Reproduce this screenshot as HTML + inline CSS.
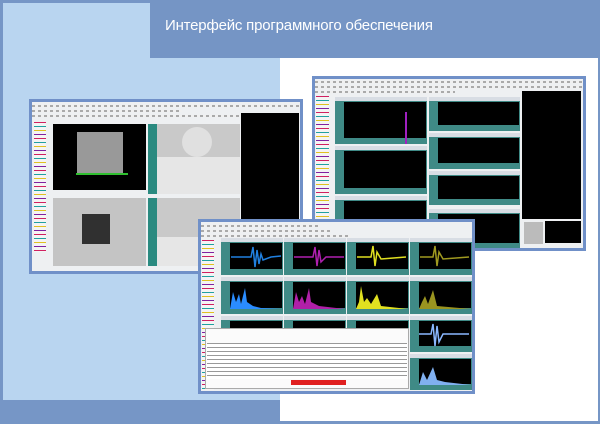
<!DOCTYPE html>
<html><head><meta charset="utf-8"><style>
*{margin:0;padding:0;box-sizing:border-box}
body{width:600px;height:424px;position:relative;overflow:hidden;background:#7696c6;font-family:"Liberation Sans",sans-serif}
.a{position:absolute}
.fr{position:absolute;background:#7090c8;padding:3px}
.in{position:absolute;left:3px;top:3px;right:3px;bottom:3px;background:#eef0f2;overflow:hidden}
.bk{position:absolute;background:#000}
.tl{position:absolute;background:#3f8a86}
.hd{position:absolute;left:0;right:0;top:0;height:4px;background:#d8dde4}
.pl{position:absolute;left:9px;right:1px;top:5px;bottom:6px;background:#000}
.pal{position:absolute;background:repeating-linear-gradient(180deg,#d02060 0 1px,#f4f4f4 1px 4px,#20a0a0 4px 5px,#f4f4f4 5px 8px,#e0c020 8px 9px,#f4f4f4 9px 12px,#8020a0 12px 13px,#f4f4f4 13px 16px)}
.tb{position:absolute;left:0;right:0;height:2px;background:repeating-linear-gradient(90deg,#aaa 0 3px,#f0f0f0 3px 6px)}
</style></head><body>
<div class="a" style="left:3px;top:3px;width:277px;height:397px;background:#b9d5f0"></div>
<div class="a" style="left:280px;top:58px;width:318px;height:363px;background:#fff"></div>
<div class="a" style="left:150px;top:0;width:450px;height:58px;background:#7595c5"></div>
<div class="a" style="left:165px;top:17px;color:#fff;font-size:15px;white-space:nowrap;letter-spacing:-0.2px">Интерфейс программного обеспечения</div>

<!-- screenshot 1 -->
<div class="fr" style="left:29px;top:99px;width:274px;height:175px"><div class="in">
 <div class="tb" style="top:3px"></div><div class="tb" style="top:8px;width:150px"></div><div class="tb" style="top:13px"></div>
 <div class="pal" style="left:2px;top:20px;width:12px;height:130px"></div>
 <div class="bk" style="left:21px;top:22px;width:93px;height:66px"></div>
 <div class="a" style="left:45px;top:30px;width:46px;height:42px;background:#999"></div>
 <div class="a" style="left:44px;top:71px;width:52px;height:2px;background:#30c030"></div>
 <div class="a" style="left:116px;top:22px;width:92px;height:70px;background:#c9c9c9"></div>
 <div class="a" style="left:116px;top:22px;width:9px;height:70px;background:#2a8a80"></div>
 <div class="a" style="left:125px;top:55px;width:83px;height:37px;background:#e6e6e6"></div>
 <div class="a" style="left:150px;top:25px;width:30px;height:30px;border-radius:50%;background:#e0e0e0"></div>
 <div class="bk" style="left:209px;top:11px;width:58px;height:107px"></div>
 <div class="a" style="left:21px;top:96px;width:93px;height:68px;background:#c4c4c4"></div>
 <div class="a" style="left:50px;top:112px;width:28px;height:30px;background:#303030"></div>
 <div class="a" style="left:116px;top:96px;width:92px;height:68px;background:#c9c9c9"></div>
 <div class="a" style="left:116px;top:96px;width:9px;height:68px;background:#2a8a80"></div>
 <div class="a" style="left:125px;top:135px;width:83px;height:29px;background:#e6e6e6"></div>
</div></div>

<!-- screenshot 2 -->
<div class="fr" style="left:312px;top:76px;width:274px;height:175px"><div class="in">
 <div class="tb" style="top:2px"></div><div class="tb" style="top:7px"></div><div class="tb" style="top:12px;width:140px"></div>
 <div class="pal" style="left:1px;top:17px;width:13px;height:122px"></div>
 <div class="tl" style="left:20px;top:18px;width:92px;height:47px"><div class="hd"></div><div class="pl"></div></div>
 <div class="tl" style="left:20px;top:67px;width:92px;height:48px"><div class="hd"></div><div class="pl"></div></div>
 <div class="tl" style="left:20px;top:117px;width:92px;height:40px"><div class="hd"></div><div class="pl"></div></div>
 <div class="tl" style="left:114px;top:18px;width:91px;height:34px"><div class="hd"></div><div class="pl"></div></div>
 <div class="tl" style="left:114px;top:54px;width:91px;height:36px"><div class="hd"></div><div class="pl"></div></div>
 <div class="tl" style="left:114px;top:92px;width:91px;height:34px"><div class="hd"></div><div class="pl"></div></div>
 <div class="tl" style="left:114px;top:130px;width:91px;height:40px"><div class="hd"></div><div class="pl"></div></div>
 <div class="a" style="left:90px;top:33px;width:2px;height:32px;background:#a020c0"></div>
 <div class="bk" style="left:207px;top:12px;width:59px;height:128px"></div>
 <div class="a" style="left:209px;top:143px;width:19px;height:22px;background:#bbb"></div>
 <div class="bk" style="left:230px;top:142px;width:36px;height:22px"></div>
</div></div>

<!-- screenshot 3 -->
<div class="fr" style="left:198px;top:219px;width:277px;height:175px"><div class="in">
 <div class="tb" style="top:3px;width:120px"></div><div class="tb" style="top:8px;width:130px"></div><div class="tb" style="top:13px;width:150px"></div>
 <div class="pal" style="left:1px;top:18px;width:12px;height:150px"></div>
 <div class="tl" style="left:20px;top:16px;width:62px;height:37px"><div class="hd"></div><div class="pl"></div></div>
 <div class="tl" style="left:83px;top:16px;width:62px;height:37px"><div class="hd"></div><div class="pl"></div></div>
 <div class="tl" style="left:146px;top:16px;width:62px;height:37px"><div class="hd"></div><div class="pl"></div></div>
 <div class="tl" style="left:209px;top:16px;width:62px;height:37px"><div class="hd"></div><div class="pl"></div></div>
 <div class="tl" style="left:20px;top:55px;width:62px;height:37px"><div class="hd"></div><div class="pl"></div></div>
 <div class="tl" style="left:83px;top:55px;width:62px;height:37px"><div class="hd"></div><div class="pl"></div></div>
 <div class="tl" style="left:146px;top:55px;width:62px;height:37px"><div class="hd"></div><div class="pl"></div></div>
 <div class="tl" style="left:209px;top:55px;width:62px;height:37px"><div class="hd"></div><div class="pl"></div></div>
 <div class="tl" style="left:20px;top:94px;width:62px;height:72px"><div class="hd"></div><div class="pl"></div></div>
 <div class="tl" style="left:83px;top:94px;width:62px;height:72px"><div class="hd"></div><div class="pl"></div></div>
 <div class="tl" style="left:146px;top:94px;width:62px;height:72px"><div class="hd"></div><div class="pl"></div></div>
 <div class="tl" style="left:209px;top:94px;width:62px;height:36px"><div class="hd"></div><div class="pl"></div></div>
 <div class="tl" style="left:209px;top:132px;width:62px;height:36px"><div class="hd"></div><div class="pl"></div></div>
 <svg class="a" style="left:0;top:0" width="271" height="169">
  <polyline fill="none" stroke="#2080e0" stroke-width="1.5" points="30,35 50,35 52,25 54,45 56,28 58,42 60,32 62,38 70,35 80,34"/>
  <polyline fill="none" stroke="#b020b0" stroke-width="1.5" points="93,35 112,35 114,25 116,44 118,28 120,40 125,35 143,35"/>
  <polyline fill="none" stroke="#e0e020" stroke-width="1.5" points="156,35 170,35 172,24 174,44 176,30 180,37 205,35"/>
  <polyline fill="none" stroke="#a09a20" stroke-width="1.5" points="219,35 232,35 234,24 236,44 238,30 242,37 268,35"/>
  <polygon fill="#2a8cff" points="29,87 32,70 35,80 38,72 40,82 44,66 46,80 52,84 60,86 81,87"/>
  <polygon fill="#b020a8" points="92,87 95,70 98,80 101,74 104,82 108,66 110,80 118,84 144,87"/>
  <polygon fill="#e0e020" points="155,87 158,80 160,64 163,80 166,76 170,82 176,72 180,84 207,87"/>
  <polygon fill="#9a9420" points="218,87 221,80 224,74 227,82 232,68 236,84 270,87"/>
  <polyline fill="none" stroke="#8ab8ff" stroke-width="1.5" points="218,112 230,112 232,102 234,124 236,104 238,120 242,112 268,112"/>
  <polygon fill="#80b0f0" points="218,163 222,150 226,158 232,145 236,158 244,160 270,163"/>
 </svg>
 <div class="a" style="left:4px;top:106px;width:204px;height:61px;background:#fbfbfb;border:1px solid #aaa"></div>
 <div class="a" style="left:6px;top:121px;width:200px;height:36px;background:repeating-linear-gradient(180deg,#999 0 1px,#fff 1px 4px)"></div>
 <div class="a" style="left:90px;top:158px;width:55px;height:5px;background:#e02020"></div>
</div></div>
</body></html>
